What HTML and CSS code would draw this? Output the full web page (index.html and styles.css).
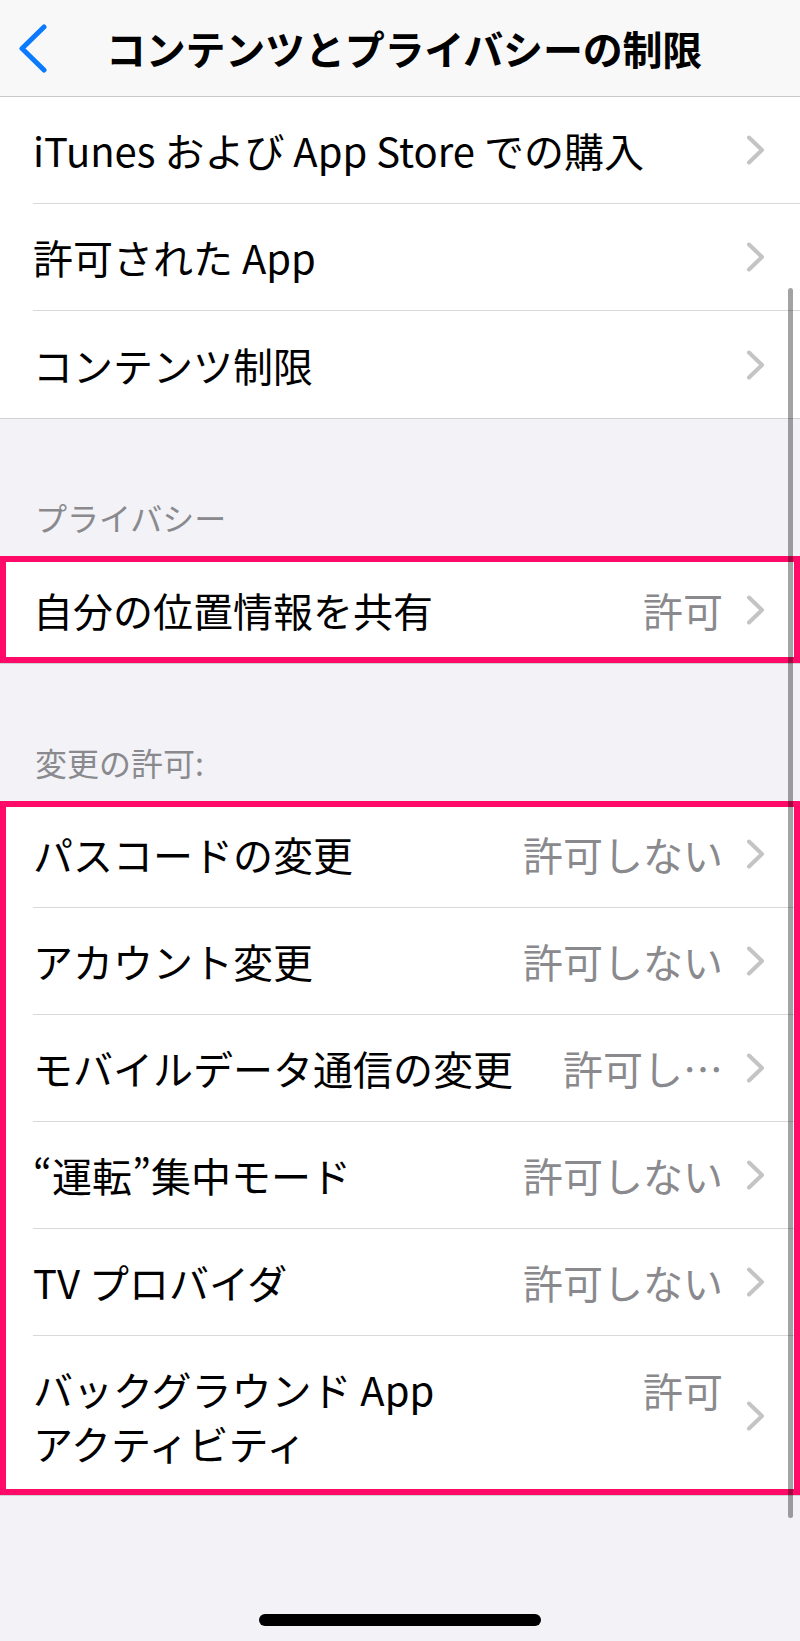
FILE: index.html
```html
<!DOCTYPE html>
<html lang="ja">
<head>
<meta charset="utf-8">
<title>コンテンツとプライバシーの制限</title>
<link rel="stylesheet" href="styles.css">
</head>
<body>
<div class="screen">
  <header class="nav">
    <div class="nav-side">
      <svg class="back" width="30" height="50" viewBox="0 0 30 50" aria-hidden="true">
        <path d="M26 4 L4 25.5 L26 47" fill="none" stroke="#0a7aff" stroke-width="5" stroke-linecap="round" stroke-linejoin="round"/>
      </svg>
    </div>
    <h1 class="nav-title">コンテンツとプライバシーの制限</h1>
    <div class="nav-side"></div>
  </header>

  <section class="group">
    <div class="row"><div class="row-inner"><span class="label">iTunes および App Store での購入</span><svg class="chev" width="20" height="30" viewBox="0 0 20 30"><path d="M3 2.5 L16 15 L3 27.5" /></svg></div></div>
    <div class="row"><div class="row-inner"><span class="label">許可された App</span><svg class="chev" width="20" height="30" viewBox="0 0 20 30"><path d="M3 2.5 L16 15 L3 27.5" /></svg></div></div>
    <div class="row"><div class="row-inner"><span class="label">コンテンツ制限</span><svg class="chev" width="20" height="30" viewBox="0 0 20 30"><path d="M3 2.5 L16 15 L3 27.5" /></svg></div></div>
  </section>

  <div class="section-header">プライバシー</div>
  <section class="group marked">
    <div class="row"><div class="row-inner"><span class="label">自分の位置情報を共有</span><span class="value">許可</span><svg class="chev" width="20" height="30" viewBox="0 0 20 30"><path d="M3 2.5 L16 15 L3 27.5" /></svg></div></div>
  </section>

  <div class="section-header">変更の許可:</div>
  <section class="group marked">
    <div class="row"><div class="row-inner"><span class="label">パスコードの変更</span><span class="value">許可しない</span><svg class="chev" width="20" height="30" viewBox="0 0 20 30"><path d="M3 2.5 L16 15 L3 27.5" /></svg></div></div>
    <div class="row"><div class="row-inner"><span class="label">アカウント変更</span><span class="value">許可しない</span><svg class="chev" width="20" height="30" viewBox="0 0 20 30"><path d="M3 2.5 L16 15 L3 27.5" /></svg></div></div>
    <div class="row"><div class="row-inner"><span class="label">モバイルデータ通信の変更</span><span class="value">許可し…</span><svg class="chev" width="20" height="30" viewBox="0 0 20 30"><path d="M3 2.5 L16 15 L3 27.5" /></svg></div></div>
    <div class="row"><div class="row-inner"><span class="label">“運転”集中モード</span><span class="value">許可しない</span><svg class="chev" width="20" height="30" viewBox="0 0 20 30"><path d="M3 2.5 L16 15 L3 27.5" /></svg></div></div>
    <div class="row"><div class="row-inner"><span class="label">TV プロバイダ</span><span class="value">許可しない</span><svg class="chev" width="20" height="30" viewBox="0 0 20 30"><path d="M3 2.5 L16 15 L3 27.5" /></svg></div></div>
    <div class="row"><div class="row-inner multi"><span class="label">バックグラウンド App<br>アクティビティ</span><span class="value top">許可</span><svg class="chev" width="20" height="30" viewBox="0 0 20 30"><path d="M3 2.5 L16 15 L3 27.5" /></svg></div></div>
  </section>

  <footer class="footer"><div class="home-indicator"></div></footer>

  <div class="scrollbar"></div>
</div>
</body>
</html>
```

FILE: styles.css
```css
* { box-sizing: border-box; }

html, body {
  margin: 0;
  padding: 0;
}

body {
  background: #f2f2f7;
  font-family: "Noto Sans CJK JP", "Noto Sans", sans-serif;
  color: #000;
  width: 800px;
}

.screen {
  position: relative;
  width: 800px;
  min-height: 1641px;
  overflow: hidden;
}

.nav {
  position: relative;
  z-index: 2;
  height: 97px;
  background: #f8f8f8;
  border-bottom: 1px solid #c9c9cc;
  display: grid;
  grid-template-columns: 1fr auto 1fr;
  align-items: center;
}

.nav-side {
  display: flex;
  align-items: center;
  padding-left: 18px;
}

.back { display: block; }

.nav-title {
  margin: 0;
  font-size: 40px;
  font-weight: 700;
  line-height: 48px;
  letter-spacing: -0.2px;
  padding-left: 8px;
  white-space: nowrap;
}

.group {
  position: relative;
  background: #fff;
  border-bottom: 1px solid #d1d1d6;
}

.marked::after {
  content: "";
  position: absolute;
  left: 0;
  top: 0;
  right: 0;
  bottom: 0;
  border: 6px solid #ff0a68;
  pointer-events: none;
  z-index: 1;
}

.row {
  padding-left: 33px;
}

.row-inner {
  display: flex;
  align-items: center;
  min-height: 107px;
  padding-right: 34px;
  border-bottom: 1px solid #d9d9dc;
}

.row:last-child .row-inner {
  border-bottom: none;
}

.row-inner.multi {
  min-height: 159px;
}

.label {
  flex: 1 1 auto;
  font-size: 40px;
  line-height: 54px;
  white-space: nowrap;
}

.value {
  flex: 0 0 auto;
  font-size: 40px;
  line-height: 54px;
  color: #8a8a8e;
  margin-right: 23px;
  margin-left: 20px;
  white-space: nowrap;
}

.value.top {
  align-self: flex-start;
  margin-top: 27px;
}

.chev {
  flex: 0 0 auto;
  display: block;
}

.chev path {
  fill: none;
  stroke: #c4c4c7;
  stroke-width: 4;
  stroke-linecap: round;
  stroke-linejoin: round;
}

.section-header {
  padding: 78px 33px 19px 35px;
  font-size: 32px;
  line-height: 40px;
  color: #8a8a8e;
}

.footer {
  height: 146px;
  display: flex;
  justify-content: center;
  padding-top: 118px;
}

.home-indicator {
  width: 282px;
  height: 12px;
  border-radius: 6px;
  background: #000;
}

.scrollbar {
  position: absolute;
  left: 788px;
  top: 288px;
  width: 5px;
  height: 1230px;
  border-radius: 3px;
  background: rgba(0, 0, 0, 0.36);
  z-index: 3;
}
```
